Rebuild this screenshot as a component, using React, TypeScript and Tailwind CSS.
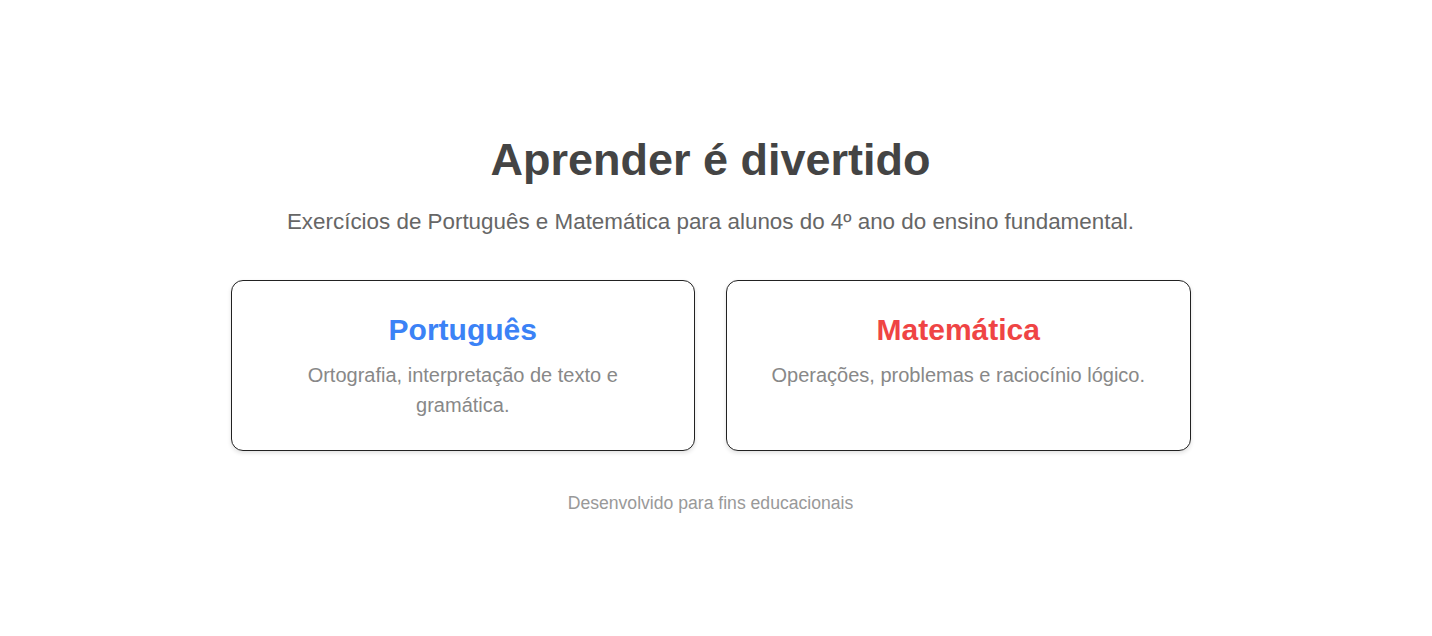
import React from 'react';

const subjects = [
  {
    name: 'Português',
    color: 'text-[#3b82f6]',
    text: 'Ortografia, interpretação de texto e gramática.',
  },
  {
    name: 'Matemática',
    color: 'text-[#ef4444]',
    text: 'Operações, problemas e raciocínio lógico.',
  },
];

export default function App() {
  return (
    <div className="min-h-screen bg-white flex items-center justify-center pt-3 pr-[11px] font-['Liberation_Sans',Arial,sans-serif]">
      <main className="w-[960px] flex flex-col items-center text-center">
        {/* Hero */}
        <h1 className="text-[45px] leading-[52px] font-bold text-[#444444]">Aprender é divertido</h1>
        <p className="mt-[21px] text-[22.4px] leading-[30px] text-[#666666]">
          Exercícios de Português e Matemática para alunos do 4º ano do ensino fundamental.
        </p>

        {/* Subject cards */}
        <div className="mt-[43px] w-full grid grid-cols-2 gap-[31px]">
          {subjects.map((s) => (
            <div
              key={s.name}
              className="rounded-xl border border-[#222222] bg-white px-8 pt-[31px] pb-[30px] shadow-[0_2px_4px_rgba(0,0,0,0.12)]"
            >
              <h2 className={`text-[30px] leading-9 font-bold ${s.color}`}>{s.name}</h2>
              <p className="mt-3 text-[20px] leading-[30px] text-[#888888]">{s.text}</p>
            </div>
          ))}
        </div>

        <footer className="mt-10 text-[17.6px] leading-6 text-[#999999]">Desenvolvido para fins educacionais</footer>
      </main>
    </div>
  );
}
